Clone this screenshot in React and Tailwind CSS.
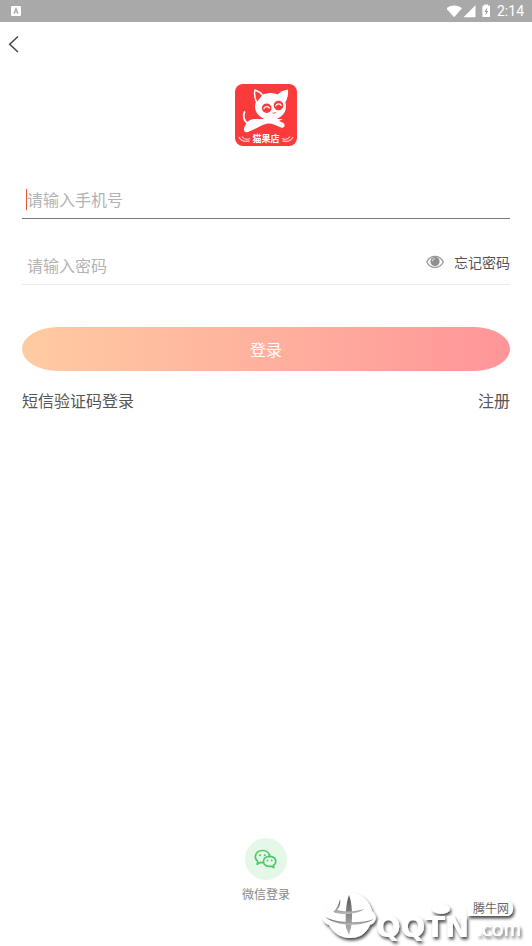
import React from "react";

function StatusBar() {
  return (
    <div className="flex h-[22px] items-center justify-between bg-[#a9a9a9] pr-2 pl-[11px] text-white">
      <svg className="h-[10px] w-[10px]" viewBox="0 0 10 10" aria-hidden="true">
        <rect width="10" height="10" rx="1" fill="#fff" />
        <path d="M3 7.8 5 2.5 7 7.8M3.7 6h2.6" fill="none" stroke="#a9a9a9" strokeWidth="1.2" />
      </svg>
      <div className="flex items-center">
        <svg className="h-[14px] w-[46px]" viewBox="0 0 46 14" fill="#fff" aria-hidden="true">
          <path d="M-.8 4.3C4.5.6 10 .6 15 4.3L7.1 13.2z" />
          <path d="M28.5 1.2v12H16.5z" />
          <path d="M37.2 1.8V.5h4v1.3h1.8V13h-7.6V1.8z" />
          <path d="M40.3 3.5 37.4 8h1.6l-.5 3.3L41.3 7h-1.7z" fill="#999" />
        </svg>
        <span className="ml-1 font-['Roboto',sans-serif] text-[14px] leading-[22px]">2:14</span>
      </div>
    </div>
  );
}

function AppLogo() {
  return (
    <svg className="h-[62px] w-[62px]" viewBox="0 0 62 62" role="img" aria-label="猫果店">
      <rect width="62" height="62" rx="8" fill="#fb3a3c" />
      <path d="M9.5 28C7.5 32 9 38 14 40" fill="none" stroke="#fff" strokeWidth="1.8" strokeLinecap="round" />
      <path
        d="M20 35H48L44 37L48.5 39C51 42 49 44.500 46 43.500C40 41 35 38.500 31 40C24 42 19 46 13 48C9.500 49 8 46.500 9.500 43C12 37 15 35 20 35Z"
        fill="#fff"
      />
      <path d="M42 11C45 8 49 6 53 5.500C53.500 10 52.500 15 50 19Z" fill="#fff" />
      <ellipse cx="35.500" cy="22.500" rx="15.500" ry="13.500" fill="#fff" />
      <path d="M20 6C23 7 26 9 28 11.500L22 19C20 15 19 10 20 6Z" fill="#fb3a3c" stroke="#fff" strokeWidth="1.500" strokeLinejoin="round" />
      <g fill="#fb3a3c">
        <circle cx="31.700" cy="24.200" r="4.800" />
        <circle cx="43.500" cy="21.500" r="4.800" />
      </g>
      <path d="M28.700 25c1.200-3 4.600-3.200 6-.6M40.500 22.300c1.200-3 4.600-3.200 6-.6" fill="none" stroke="#fff" strokeWidth="1.200" />
      <path d="M37.500 28.800c1.300.8 2.600.4 3.300-.8" fill="none" stroke="#fb3a3c" strokeWidth="0.900" />
      <g fill="none" stroke="#ffc4c4" strokeWidth="1.300">
        <path d="M4 53c2 4.500 6 5 10.500 4M7 52.500c2 3 5 3.500 8 2" />
        <path d="M58 53c-2 4.500-6 5-10.500 4M55 52.500c-2 3-5 3.500-8 2" />
      </g>
      <text x="31" y="58" textAnchor="middle" className="fill-white font-['Noto_Sans_CJK_SC',sans-serif] text-[9px] font-bold">
        猫果店
      </text>
    </svg>
  );
}

function EyeIcon() {
  return (
    <svg className="h-[14px] w-[18px]" viewBox="0 0 18 14" aria-hidden="true">
      <path d="M.7 7C4.5-.4 13.500-.4 17.300 7C13.500 14.200 4.500 14.200.7 7Z" fill="#fff" stroke="#999" strokeWidth="1.300" />
      <circle cx="9" cy="6.500" r="4.600" fill="#8f8f8f" />
      <path d="M6.300 6.300C6.300 4.900 7.400 3.800 8.800 3.800" fill="none" stroke="#ddd" strokeWidth="1.100" />
    </svg>
  );
}

function WeChatIcon() {
  return (
    <svg className="h-[20px] w-[24px]" viewBox="0 0 24 20" fill="none" stroke="#49cb68" strokeWidth="1.700" strokeLinejoin="round" aria-hidden="true">
      <path d="M9.300 13.700C8.200 13.800 7.200 13.700 6.200 13.400L3.200 15.200L3.700 12.200C-.6 8.800 1.200 1.800 8.500 1.500C12.600 1.400 15.300 4 15.600 7.200" />
      <path d="M15.500 7.300C11.900 7.300 9.400 9.700 9.400 12.400C9.400 15.900 13 18.200 17 17.200L19.800 18.600L19.300 16.300C24 13 21.500 7.300 15.500 7.300Z" />
      <g fill="#49cb68" stroke="none">
        <circle cx="6" cy="6.300" r="1" />
        <circle cx="10.800" cy="6.300" r="1" />
        <circle cx="13.500" cy="11.500" r="0.900" />
        <circle cx="17.700" cy="11.500" r="0.900" />
      </g>
    </svg>
  );
}

function SiteMark() {
  return (
    <svg className="absolute right-0 bottom-0 h-[61px] w-[222px]" viewBox="0 0 222 61" role="img" aria-label="腾牛网 QQTN.com">
      <defs>
        <filter id="markShadow" x="-10%" y="-20%" width="120%" height="150%">
          <feDropShadow dx="1.500" dy="2.500" stdDeviation="1.600" floodColor="#000" floodOpacity="0.700" />
        </filter>
        <linearGradient id="markShade" x1="0" y1="0" x2="0" y2="1">
          <stop offset="0" stopColor="#555" />
          <stop offset="1" stopColor="#bbb" />
        </linearGradient>
      </defs>
      <g filter="url(#markShadow)" fill="#fff">
        <path d="M17 24C20 13 29 7 40 7.500C52 8 60 17 62 26C65 29 67 32 65 36C64 38 62 39 60 40C56 49 49 53 40 53C30 53 23 47 19 40C14 38 12 34 14 31Z" />
        <text x="66" y="52" className="font-['DejaVu_Sans',sans-serif] text-[29px] font-bold">
          QQTN
        </text>
        <ellipse cx="131" cy="24" rx="9" ry="5" />
        <path d="M165 16H197C205 16 205 31 197 31H158C156 25 159 16 165 16Z" />
        <text x="167" y="51" className="font-['Lato',sans-serif] text-[21px]">
          .com
        </text>
      </g>
      <g fill="url(#markShade)">
        <path d="M39 10C42 18 43 32 41 43L39 50L36 43C35 31 36 18 39 10Z" />
        <path d="M30 14C31 19 29 23 27 25C34 27 45 27 54 24C48 29 32 31 23 27C27 24 29 19 30 14Z" />
        <path d="M15 32C27 38 51 39 64 34C53 42 27 42 15 32Z" />
      </g>
      <text x="163" y="28" className="fill-[#666] font-['Noto_Sans_CJK_SC',sans-serif] text-[12px]">
        腾牛网
      </text>
    </svg>
  );
}

export default function App() {
  return (
    <div className="relative flex min-h-screen flex-col bg-white font-['Noto_Sans_CJK_SC',sans-serif] text-[#555]">
      <StatusBar />
      <header className="flex h-[44px] items-center px-2">
        <button type="button" aria-label="返回" className="flex h-[24px] w-[24px] items-center">
          <svg className="h-[18px] w-[12px]" viewBox="0 0 12 18" fill="none" stroke="#444" strokeWidth="1.500" aria-hidden="true">
            <path d="M10 1.500 1.700 9.200 10 17" />
          </svg>
        </button>
      </header>

      <main className="flex flex-1 flex-col px-[22px] pt-[18px]">
        <div className="flex justify-center">
          <AppLogo />
        </div>

        <form className="mt-9" onSubmit={(event) => event.preventDefault()}>
          <div className="relative flex h-[37px] items-center border-b border-[#75757d]">
            <input
              type="tel"
              aria-label="手机号"
              placeholder="请输入手机号"
              className="h-[36px] min-w-0 flex-1 pb-[2px] pl-[5px] text-[16px] leading-6 outline-none placeholder:text-[#b3b3b3]"
            />
            <span className="absolute top-[7px] left-1 h-[21px] w-px bg-[#e8552d]" />
          </div>

          <div className="mt-[29px] flex h-[37px] items-center border-b border-[#ececec]">
            <input
              type="password"
              aria-label="密码"
              placeholder="请输入密码"
              className="h-[36px] min-w-0 flex-1 pb-[2px] pl-[5px] text-[16px] leading-6 outline-none placeholder:text-[#b3b3b3]"
            />
            <div className="mb-2 flex items-center gap-[10px]">
              <button type="button" aria-label="显示密码">
                <EyeIcon />
              </button>
              <a href="#forgot" className="text-[14px] leading-5">
                忘记密码
              </a>
            </div>
          </div>

          <button
            type="submit"
            className="mt-[42px] block h-[44px] w-full rounded-[36px/22px] bg-gradient-to-r from-[#ffcba2] to-[#ff9599] text-[16px] leading-6 text-white"
          >
            登录
          </button>
        </form>

        <div className="mt-[17px] flex items-center justify-between text-[16px] leading-6">
          <a href="#sms">短信验证码登录</a>
          <a href="#register">注册</a>
        </div>
      </main>

      <footer className="flex justify-center pb-[42px]">
        <button type="button" className="flex flex-col items-center gap-1 text-[12px] leading-5 text-[#888]">
          <span className="flex h-[42px] w-[42px] items-center justify-center rounded-full bg-[#e5f8e8]">
            <WeChatIcon />
          </span>
          微信登录
        </button>
      </footer>
      <SiteMark />
    </div>
  );
}
